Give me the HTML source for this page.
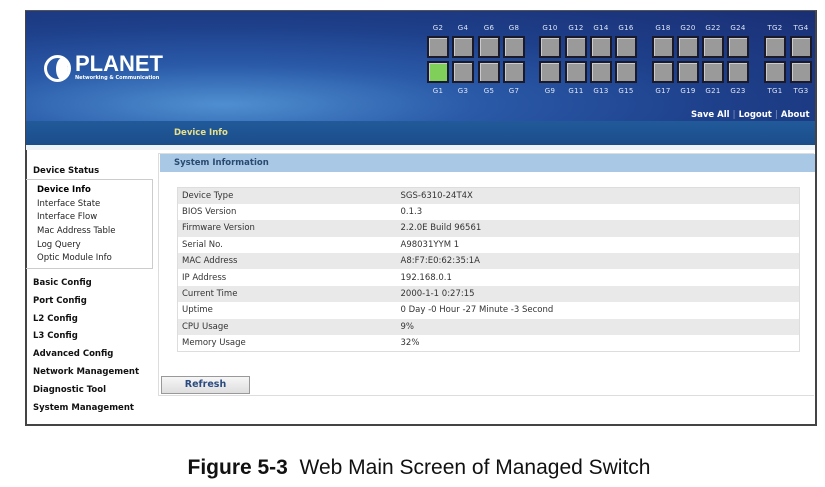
<!DOCTYPE html>
<html><head><meta charset="utf-8"><style>
*{margin:0;padding:0;box-sizing:border-box}
body{width:825px;height:487px;background:#fff;position:relative;font-family:"DejaVu Sans","Liberation Sans",sans-serif;overflow:hidden}
.abs{position:absolute}
#frame{left:25px;top:10px;width:792px;height:416px;border:2px solid #444;border-top-color:#555}
#banner{left:26px;top:11px;width:789px;height:110px;background:radial-gradient(ellipse at 25% 85%,#4f8fd0 0%,#2a5aa8 30%,#1e3f8a 60%,#1a2f74 100%)}
#bar{left:26px;top:121px;width:789px;height:24px;background:linear-gradient(#215a9a,#1b4d8a)}
.port{position:absolute;width:22px;height:22px;background:#9a9a9a;border:2px solid #1a1a2a;box-shadow:inset 1px 1px 0 #ccc}
.lbl{position:absolute;font-size:7px;color:#dfe6f5;width:22px;text-align:center;letter-spacing:.3px}
.menu{position:absolute;left:33px;font-size:8.5px;font-weight:bold;color:#111}
.sub{position:absolute;left:37px;font-size:8.5px;color:#222}
table{border-collapse:collapse;font-size:8.5px;color:#333}
td{height:16.4px;padding:0 4px}
tr:nth-child(odd){background:#e9e9e9}
</style></head><body>
<div class="abs" id="frame"></div>
<div class="abs" id="banner"></div>
<div class="abs" style="left:44px;top:55px;width:27px;height:27px;border-radius:50%;border:3px solid #fff;background:#2a5aa8"></div>
<div class="abs" style="left:56px;top:58px;width:12px;height:22px;border-radius:50%;background:#fff"></div>
<div class="abs" style="left:75px;top:51px;font-size:22px;font-weight:bold;color:#fff;font-family:'Liberation Sans',sans-serif;letter-spacing:0px">PLANET</div>
<div class="abs" style="left:75px;top:75px;font-size:5px;font-weight:bold;color:#fff">Networking &amp; Communication</div>
<div class="abs" id="bar"></div>
<div class="abs" style="left:174px;top:128px;font-size:8.5px;font-weight:bold;color:#e8e08a">Device Info</div>
<div class="abs" style="left:691px;top:110px;font-size:8.5px;font-weight:bold;color:#fff;white-space:nowrap">Save All <span style="color:#6a80b0">|</span> Logout <span style="color:#6a80b0">|</span> About</div>
<div id="ports"></div>
<script>
var xs=[427,452,478,503,539,565,590,615,652,677,702,727,764,790];
var tl=["G2","G4","G6","G8","G10","G12","G14","G16","G18","G20","G22","G24","TG2","TG4"];
var bl=["G1","G3","G5","G7","G9","G11","G13","G15","G17","G19","G21","G23","TG1","TG3"];
var h="";
for(var i=0;i<14;i++){var x=xs[i];
h+='<div class="port" style="left:'+x+'px;top:36px"></div>';
h+='<div class="port" style="left:'+x+'px;top:61px'+(i==0?';background:#7fcf5a':'')+'"></div>';
h+='<div class="lbl" style="left:'+(x-3)+'px;top:24px;width:28px">'+tl[i]+'</div>';
h+='<div class="lbl" style="left:'+(x-3)+'px;top:87px;width:28px">'+bl[i]+'</div>';}
document.getElementById("ports").innerHTML=h;
</script>
<div class="abs" style="left:26px;top:145px;width:789px;height:5px;background:#eef3f8"></div>
<div class="menu" style="top:166px">Device Status</div>
<div class="abs" style="left:26px;top:179px;width:127px;height:90px;border:1px solid #ccc;border-left:none"></div>
<div class="sub" style="top:185px;font-weight:bold;color:#000">Device Info</div>
<div class="sub" style="top:199px">Interface State</div>
<div class="sub" style="top:212px">Interface Flow</div>
<div class="sub" style="top:226px">Mac Address Table</div>
<div class="sub" style="top:240px">Log Query</div>
<div class="sub" style="top:253px">Optic Module Info</div>
<div class="menu" style="top:278px">Basic Config</div>
<div class="menu" style="top:296px">Port Config</div>
<div class="menu" style="top:314px">L2 Config</div>
<div class="menu" style="top:331px">L3 Config</div>
<div class="menu" style="top:349px">Advanced Config</div>
<div class="menu" style="top:367px">Network Management</div>
<div class="menu" style="top:385px">Diagnostic Tool</div>
<div class="menu" style="top:403px">System Management</div>
<div class="abs" style="left:158px;top:153px;width:656px;height:243px;border:1px solid #ddd;border-right:none"></div>
<div class="abs" style="left:160px;top:154px;width:655px;height:18px;background:#a9c8e6"></div>
<div class="abs" style="left:174px;top:158px;font-size:8.5px;font-weight:bold;color:#2a4a70">System Information</div>
<table class="abs" style="left:177px;top:187px;width:623px;border:1px solid #ddd">
<tr><td style="width:219px">Device Type</td><td>SGS-6310-24T4X</td></tr>
<tr><td>BIOS Version</td><td>0.1.3</td></tr>
<tr><td>Firmware Version</td><td>2.2.0E Build 96561</td></tr>
<tr><td>Serial No.</td><td>A98031YYM 1</td></tr>
<tr><td>MAC Address</td><td>A8:F7:E0:62:35:1A</td></tr>
<tr><td>IP Address</td><td>192.168.0.1</td></tr>
<tr><td>Current Time</td><td>2000-1-1 0:27:15</td></tr>
<tr><td>Uptime</td><td>0 Day -0 Hour -27 Minute -3 Second</td></tr>
<tr><td>CPU Usage</td><td>9%</td></tr>
<tr><td>Memory Usage</td><td>32%</td></tr>
</table>
<div class="abs" style="left:161px;top:376px;width:89px;height:18px;border:1px solid #999;background:linear-gradient(#f6f6f6,#dedede);font-size:9.5px;font-weight:bold;color:#2a4a80;text-align:center;line-height:16px">Refresh</div>
<div class="abs" style="left:0;top:456px;width:838px;text-align:center;font-family:'Liberation Sans',sans-serif;font-size:21px;color:#111"><b>Figure 5-3</b>&nbsp; Web Main Screen of Managed Switch</div>
</body></html>
